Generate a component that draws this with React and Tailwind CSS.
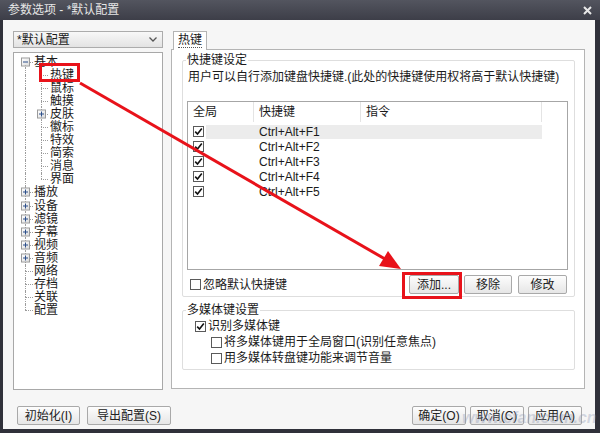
import React from 'react'

const font = "font-['Liberation_Sans','Noto_Sans_CJK_SC',sans-serif]"

function Expander({ open, className = '' }) {
  return (
    <div className={`absolute top-1/2 -translate-y-1/2 w-[9px] h-[9px] border border-[#9a9a9a] bg-gradient-to-br from-white to-[#dcdcdc] flex items-center justify-center ${className}`}>
      <div className="relative w-[5px] h-[5px] flex items-center justify-center">
        <div className="w-[5px] h-[1px] bg-[#2c4f8a]" />
        {!open && <div className="absolute w-[1px] h-[5px] bg-[#2c4f8a]" />}
      </div>
    </div>
  )
}

function TreeRow({ label, depth = 0, exp, open, first, last, childLast }) {
  return (
    <div className="flex h-[13.1px] items-center">
      <div className="relative w-[19px] h-full shrink-0">
        {!first && <div className="absolute left-[11px] top-0 h-1/2 border-l border-dotted border-[#9c9c9c]" />}
        {!last && <div className="absolute left-[11px] top-1/2 h-1/2 border-l border-dotted border-[#9c9c9c]" />}
        {depth === 0 && <div className="absolute left-[11px] top-1/2 w-[8px] border-t border-dotted border-[#9c9c9c]" />}
        {depth === 0 && exp && <Expander open={open} className="left-[7px]" />}
      </div>
      {depth === 1 && (
        <div className="relative w-[16px] h-full shrink-0">
          <div className="absolute left-[8px] top-0 h-1/2 border-l border-dotted border-[#9c9c9c]" />
          {!childLast && <div className="absolute left-[8px] top-1/2 h-1/2 border-l border-dotted border-[#9c9c9c]" />}
          <div className="absolute left-[8px] top-1/2 w-[7px] border-t border-dotted border-[#9c9c9c]" />
          {exp && <Expander open={open} className="left-[4px]" />}
        </div>
      )}
      <span className="ml-[1px] text-[12px] leading-none text-[#1a1a1a] whitespace-nowrap">{label}</span>
    </div>
  )
}

function Check({ checked, className = '' }) {
  return (
    <div className={`w-[11px] h-[11px] border border-[#5a5a5a] bg-white flex items-center justify-center shrink-0 ${className}`}>
      {checked && (
        <svg width="9" height="9" viewBox="0 0 9 9">
          <path d="M1.2 4.6 L3.5 7 L7.8 1.5" fill="none" stroke="#111" strokeWidth="1.6" />
        </svg>
      )}
    </div>
  )
}

function Button({ children, className = '' }) {
  return (
    <div className={`h-[19px] border border-[#a9a9a9] rounded-[2px] bg-gradient-to-b from-[#fdfdfd] to-[#e6e6e6] flex items-center justify-center text-[12px] text-[#222] ${className}`}>
      {children}
    </div>
  )
}

const rows = ['Ctrl+Alt+F1', 'Ctrl+Alt+F2', 'Ctrl+Alt+F3', 'Ctrl+Alt+F4', 'Ctrl+Alt+F5']

export default function App() {
  return (
    <div className={`relative w-[600px] h-[433px] overflow-hidden bg-[#30313a] flex flex-col ${font}`}>
      {/* Title bar */}
      <div className="h-[20px] shrink-0 flex items-center justify-between pl-[8px] pr-[8px] bg-gradient-to-b from-[#53555f] to-[#3d3e48]">
        <span className="text-[12px] text-[#e6e6e6] leading-none">参数选项 - *默认配置</span>
        <svg width="9" height="9" viewBox="0 0 9 9">
          <path d="M1 1 L8 8 M8 1 L1 8" stroke="#e8e8e8" strokeWidth="2" />
        </svg>
      </div>

      {/* Dialog body */}
      <div className="flex-1 ml-[3px] mr-[5px] mb-[4px] bg-[#f6f6f6] flex flex-col">
        <div className="flex pt-[11px] pl-[10px]">
          {/* Left column */}
          <div className="w-[150px] flex flex-col">
            <div className="h-[17px] border border-[#acacac] bg-gradient-to-b from-[#f8f8f8] to-[#e3e3e3] flex items-center justify-between pl-[3px] pr-[5px]">
              <span className="text-[12px] leading-none text-[#1a1a1a]">*默认配置</span>
              <svg width="8" height="5" viewBox="0 0 8 5">
                <path d="M0.5 0.5 L4 4 L7.5 0.5" fill="none" stroke="#555" strokeWidth="1.3" />
              </svg>
            </div>
            <div className="mt-[4px] h-[338px] border border-[#a8a8a8] bg-white pt-[2px]">
              <TreeRow label="基本" exp open first />
              <TreeRow label="热键" depth={1} />
              <TreeRow label="鼠标" depth={1} />
              <TreeRow label="触摸" depth={1} />
              <TreeRow label="皮肤" depth={1} exp />
              <TreeRow label="徽标" depth={1} />
              <TreeRow label="特效" depth={1} />
              <TreeRow label="简索" depth={1} />
              <TreeRow label="消息" depth={1} />
              <TreeRow label="界面" depth={1} childLast />
              <TreeRow label="播放" exp />
              <TreeRow label="设备" exp />
              <TreeRow label="滤镜" exp />
              <TreeRow label="字幕" exp />
              <TreeRow label="视频" exp />
              <TreeRow label="音频" exp />
              <TreeRow label="网络" />
              <TreeRow label="存档" />
              <TreeRow label="关联" />
              <TreeRow label="配置" last />
            </div>
          </div>

          {/* Right column */}
          <div className="ml-[8px] w-[414px] flex flex-col">
            <div className="flex pl-[2px] h-[19px] relative z-10">
              <div className="w-[34px] h-[19px] border border-b-0 border-[#b4b4b4] bg-white flex items-center justify-center">
                <span className="text-[12px] leading-none text-[#1a1a1a] border-b border-dotted border-[#555] pb-[1px]">热键</span>
              </div>
            </div>
            <div className="-mt-[1px] h-[340px] border border-[#b4b4b4] bg-white pl-[10px] pt-[4px]">
              {/* Group 1 */}
              <div className="relative w-[393px] h-[237px] mt-[6px] border border-[#dedede] rounded-[2px] pl-[4px] pr-[7px]">
                <div className="absolute -top-[8px] left-[3px] bg-white px-[1px] text-[12px] leading-[15px] text-[#1a1a1a]">快捷键设定</div>
                <div className="pt-[9px] pl-[1px] text-[12px] leading-[14px] text-[#1a1a1a] whitespace-nowrap">用户可以自行添加键盘快捷键.(此处的快捷键使用权将高于默认快捷键)</div>
                <div className="mt-[17px] w-[381px] h-[169px] border border-[#a6a6a6] bg-white">
                  <div className="flex h-[20px] items-center text-[12px] text-[#1a1a1a]">
                    <div className="w-[66px] h-full flex items-center pl-[5px] border-r border-[#e4e4e4]">全局</div>
                    <div className="w-[107px] h-full flex items-center pl-[5px] border-r border-[#e4e4e4]">快捷键</div>
                    <div className="w-[181px] h-full flex items-center pl-[5px] border-r border-[#e4e4e4]">指令</div>
                  </div>
                  <div className="pt-[2px]">
                    {rows.map((r, i) => (
                      <div key={r} className="flex h-[15px] items-center">
                        <Check checked className="ml-[5px]" />
                        <div className={`ml-[2px] w-[336px] h-[14px] flex items-center pl-[53px] text-[12px] text-[#1a1a1a] ${i === 0 ? 'bg-[#ececec]' : ''}`}>
                          {r}
                        </div>
                      </div>
                    ))}
                  </div>
                </div>
                <div className="flex items-center mt-[5px]">
                  <Check className="ml-[3px]" />
                  <span className="ml-[2px] text-[12px] text-[#1a1a1a]">忽略默认快捷键</span>
                  <div className="flex-1" />
                  <Button className="w-[50px]">添加...</Button>
                  <Button className="w-[48px] ml-[5px]">移除</Button>
                  <Button className="w-[49px] ml-[6px]">修改</Button>
                </div>
              </div>

              {/* Group 2 */}
              <div className="relative w-[393px] h-[60px] mt-[13px] border border-[#dedede] rounded-[2px]">
                <div className="absolute -top-[8px] left-[3px] bg-white px-[1px] text-[12px] leading-[15px] text-[#1a1a1a]">多媒体键设置</div>
                <div className="pt-[8px] pl-[12px] flex items-center">
                  <Check checked />
                  <span className="ml-[2px] text-[12px] leading-[14px] text-[#1a1a1a]">识别多媒体键</span>
                </div>
                <div className="pt-[2px] pl-[28px] flex items-center">
                  <Check />
                  <span className="ml-[2px] text-[12px] leading-[14px] text-[#1a1a1a]">将多媒体键用于全局窗口(识别任意焦点)</span>
                </div>
                <div className="pt-[2px] pl-[28px] flex items-center">
                  <Check />
                  <span className="ml-[2px] text-[12px] leading-[14px] text-[#1a1a1a]">用多媒体转盘键功能来调节音量</span>
                </div>
              </div>
            </div>
          </div>
        </div>

        {/* Bottom buttons */}
        <div className="flex items-center mt-[16px] pl-[14px] pr-[13px]">
          <Button className="w-[63px]">初始化(I)</Button>
          <Button className="w-[84px] ml-[7px]">导出配置(S)</Button>
          <div className="flex-1" />
          <Button className="w-[54px]">确定(O)</Button>
          <Button className="w-[54px] ml-[4px]">取消(C)</Button>
          <Button className="w-[54px] ml-[4px]">应用(A)</Button>
        </div>
      </div>

      {/* Watermark */}
      <div className="absolute left-[462px] top-[406px] text-[16px] italic font-bold text-[#8c96b4]/35 pointer-events-none whitespace-nowrap">www.cfan.com.cn</div>

      {/* Annotations */}
      <div className="absolute left-[39px] top-[63px] w-[41px] h-[19px] border-[3px] border-[#e8121a] pointer-events-none" />
      <div className="absolute left-[402px] top-[272px] w-[60px] h-[27px] border-[3px] border-[#e8121a] pointer-events-none" />
      <svg className="absolute inset-0 pointer-events-none" width="600" height="433" viewBox="0 0 600 433">
        <line x1="80" y1="83" x2="385" y2="259" stroke="#e8121a" strokeWidth="3" />
        <polygon points="401,269 379,266 388,251" fill="#e8121a" />
      </svg>
    </div>
  )
}
